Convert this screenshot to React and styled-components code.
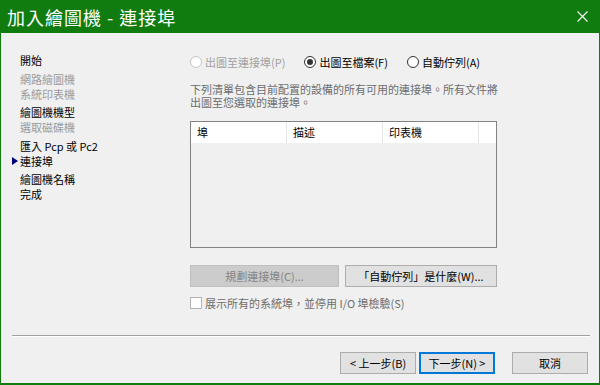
import React from "react";
import styled, { createGlobalStyle } from "styled-components";

const GlobalStyle = createGlobalStyle`
  html, body { margin: 0; padding: 0; }
  body {
    width: 600px;
    height: 385px;
    overflow: hidden;
    background: #f0f0f0;
    font-family: "Noto Sans CJK TC", "Noto Sans", sans-serif;
  }
`;

const Window = styled.div`
  width: 600px;
  height: 385px;
  box-sizing: border-box;
  border-left: 1px solid #107c10;
  border-right: 1px solid #107c10;
  border-bottom: 2px solid #107c10;
  background: #f0f0f0;
  display: flex;
  flex-direction: column;
`;

const TitleBar = styled.div`
  height: 33px;
  flex: none;
  background: #107c10;
  color: #fff;
  display: flex;
  align-items: center;
  justify-content: space-between;
  padding: 0 12px 0 7px;
  margin: 0 -1px;
`;

const Title = styled.div`
  font-size: 18px;
  line-height: 1;
  letter-spacing: 1px;
  font-weight: 400;
`;

const Close = styled.svg`
  width: 11px;
  height: 11px;
  display: block;
`;

const Body = styled.div`
  height: 302px;
  flex: none;
  display: flex;
`;

const Nav = styled.div`
  width: 170px;
  flex: none;
  padding: 20px 0 0 19px;
  font-size: 11px;
  line-height: 15px;
`;

const NavGroup = styled.div`
  & + & { margin-top: 3.5px; }
`;

const NavItem = styled.div`
  position: relative;
  color: ${(p) => (p.$disabled ? "#9a9a9a" : "#000")};
  white-space: nowrap;
  ${(p) =>
    p.$current &&
    `
    &::before {
      content: "";
      position: absolute;
      left: -8px;
      top: 3px;
      width: 0;
      height: 0;
      border-left: 6px solid #000080;
      border-top: 4.5px solid transparent;
      border-bottom: 4.5px solid transparent;
    }
  `}
`;

const Content = styled.div`
  width: 307px;
  padding-top: 22px;
  font-size: 11px;
`;

const RadioRow = styled.div`
  display: flex;
  align-items: center;
  gap: 19px;
  height: 14px;
  line-height: 14px;
`;

const RadioItem = styled.label`
  display: flex;
  align-items: center;
  gap: 3px;
  color: ${(p) => (p.$disabled ? "#a0a0a0" : "#000")};
  white-space: nowrap;
`;

const RadioCircle = styled.span`
  width: 12px;
  height: 12px;
  box-sizing: border-box;
  border-radius: 50%;
  border: 1px solid ${(p) => (p.$disabled ? "#c4c4c4" : "#333")};
  background: #fff;
  display: flex;
  align-items: center;
  justify-content: center;
`;

const RadioDot = styled.span`
  width: 6px;
  height: 6px;
  border-radius: 50%;
  background: #333;
`;

const Desc = styled.p`
  margin: 14px 0 0;
  color: #6d6d6d;
  line-height: 13px;
  white-space: nowrap;
`;

const ListBox = styled.div`
  margin-top: 12px;
  height: 127px;
  box-sizing: border-box;
  border: 1px solid #828282;
  background: #f0f0f0;
`;

const ListHeader = styled.div`
  height: 21px;
  background: #fff;
  display: grid;
  grid-template-columns: 96px 96px 96px 1fr;
`;

const HeaderCell = styled.div`
  box-sizing: border-box;
  padding-left: 6px;
  line-height: 21px;
  color: #000;
  border-right: ${(p) => (p.$last ? "none" : "1px solid #e5e5e5")};
`;

const ButtonRow = styled.div`
  margin-top: 17px;
  display: flex;
  gap: 6px;
`;

const Button = styled.button`
  width: ${(p) => p.$w}px;
  height: 22px;
  box-sizing: border-box;
  padding: 0;
  margin: 0;
  font-family: inherit;
  font-size: 11px;
  line-height: 1;
  background: ${(p) => (p.disabled ? "#cccccc" : "#e1e1e1")};
  border: ${(p) =>
    p.$default ? "2px solid #0078d7" : `1px solid ${p.disabled ? "#bfbfbf" : "#adadad"}`};
  color: ${(p) => (p.disabled ? "#838383" : "#000")};
  white-space: nowrap;
`;

const CheckRow = styled.label`
  margin-top: 9px;
  height: 14px;
  line-height: 14px;
  display: flex;
  align-items: center;
  gap: 3px;
  color: #6d6d6d;
  white-space: nowrap;
`;

const CheckBox = styled.span`
  width: 12px;
  height: 12px;
  box-sizing: border-box;
  border: 1px solid #b4b4b4;
  background: #fff;
`;

const Separator = styled.div`
  height: 0;
  margin: 0 9px 0 11px;
  border-top: 1px solid #a0a0a0;
  border-bottom: 1px solid #fff;
`;

const Footer = styled.div`
  display: flex;
  justify-content: flex-end;
  align-items: flex-start;
  padding: 15px 11px 0 0;
  gap: 3px;
`;

const Spacer = styled.div`
  width: 11px;
`;

const navGroups = [
  [{ t: "開始" }],
  [
    { t: "網路繪圖機", d: true },
    { t: "系統印表機", d: true },
  ],
  [{ t: "繪圖機機型" }, { t: "選取磁碟機", d: true }],
  [{ t: "匯入 Pcp 或 Pc2" }, { t: "連接埠", c: true }],
  [{ t: "繪圖機名稱" }, { t: "完成" }],
];

export default function App() {
  return (
    <>
      <GlobalStyle />
      <Window>
        <TitleBar>
          <Title>加入繪圖機 - 連接埠</Title>
          <Close viewBox="0 0 11 11">
            <path d="M0.5 0.5 L10.5 10.5 M10.5 0.5 L0.5 10.5" stroke="#fff" strokeWidth="1.1" fill="none" />
          </Close>
        </TitleBar>
        <Body>
          <Nav>
            {navGroups.map((g, i) => (
              <NavGroup key={i}>
                {g.map((it) => (
                  <NavItem key={it.t} $disabled={it.d} $current={it.c}>
                    {it.t}
                  </NavItem>
                ))}
              </NavGroup>
            ))}
          </Nav>
          <Content>
            <RadioRow>
              <RadioItem $disabled>
                <RadioCircle $disabled />
                出圖至連接埠(P)
              </RadioItem>
              <RadioItem>
                <RadioCircle>
                  <RadioDot />
                </RadioCircle>
                出圖至檔案(F)
              </RadioItem>
              <RadioItem>
                <RadioCircle />
                自動佇列(A)
              </RadioItem>
            </RadioRow>
            <Desc>
              下列清單包含目前配置的設備的所有可用的連接埠。所有文件將
              <br />
              出圖至您選取的連接埠。
            </Desc>
            <ListBox>
              <ListHeader>
                <HeaderCell>埠</HeaderCell>
                <HeaderCell>描述</HeaderCell>
                <HeaderCell>印表機</HeaderCell>
                <HeaderCell $last />
              </ListHeader>
            </ListBox>
            <ButtonRow>
              <Button $w={149} disabled>
                規劃連接埠(C)...
              </Button>
              <Button $w={152}>「自動佇列」是什麼(W)...</Button>
            </ButtonRow>
            <CheckRow>
              <CheckBox />
              展示所有的系統埠，並停用 I/O 埠檢驗(S)
            </CheckRow>
          </Content>
        </Body>
        <Separator />
        <Footer>
          <Button $w={76}>&lt; 上一步(B)</Button>
          <Button $w={76} $default>
            下一步(N) &gt;
          </Button>
          <Spacer />
          <Button $w={76}>取消</Button>
        </Footer>
      </Window>
    </>
  );
}
